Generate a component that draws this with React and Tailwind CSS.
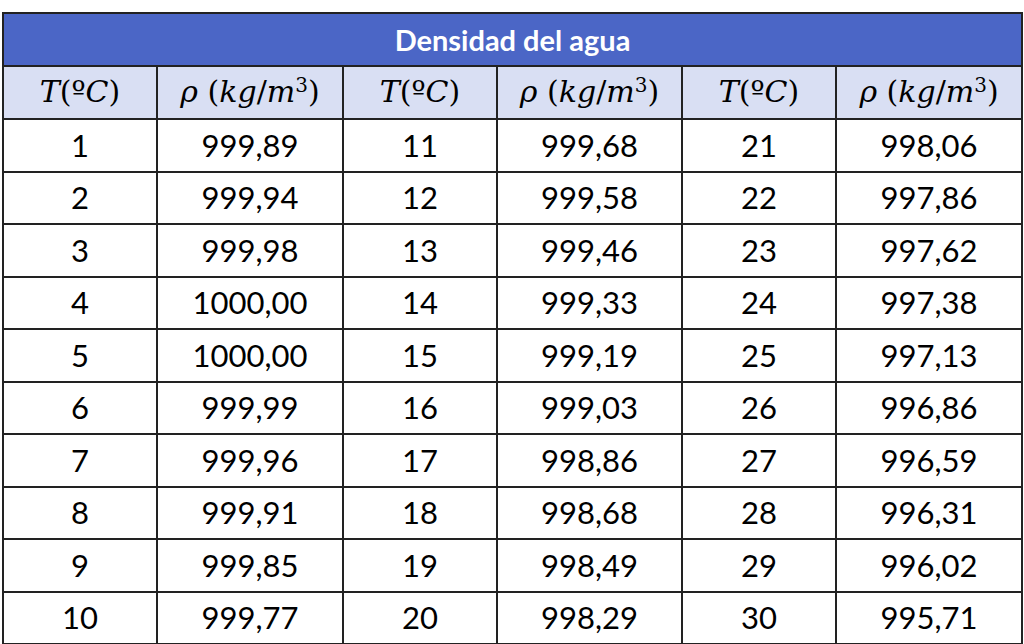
import React from "react";

const rows = [
  ["1", "999,89", "11", "999,68", "21", "998,06"],
  ["2", "999,94", "12", "999,58", "22", "997,86"],
  ["3", "999,98", "13", "999,46", "23", "997,62"],
  ["4", "1000,00", "14", "999,33", "24", "997,38"],
  ["5", "1000,00", "15", "999,19", "25", "997,13"],
  ["6", "999,99", "16", "999,03", "26", "996,86"],
  ["7", "999,96", "17", "998,86", "27", "996,59"],
  ["8", "999,91", "18", "998,68", "28", "996,31"],
  ["9", "999,85", "19", "998,49", "29", "996,02"],
  ["10", "999,77", "20", "998,29", "30", "995,71"],
];

const widths = ["w-[154px]", "w-[186px]", "w-[154px]", "w-[185px]", "w-[154px]", "w-[186px]"];

const TempHead = () => (
  <span className="font-['DejaVu_Serif',serif] text-[30px] leading-none">
    <i>T</i>(º<i>C</i>)
  </span>
);

const RhoHead = () => (
  <span className="font-['DejaVu_Serif',serif] text-[30px] leading-none whitespace-nowrap">
    <i>ρ</i> (<i>kg</i>/<i>m</i>
    <sup className="text-[20px] not-italic">3</sup>)
  </span>
);

const App = () => {
  return (
    <div className="w-[1024px] h-[644px] bg-white pt-[12px] pl-[2px]">
      <table className="table-fixed border-collapse w-[1019px] text-black font-['Lato',sans-serif]">
        <colgroup>
          {widths.map((w, i) => (
            <col key={i} className={w} />
          ))}
        </colgroup>
        <thead>
          <tr className="h-[53px]">
            <th
              colSpan={6}
              className="bg-[#4b66c6] border-2 border-[#222] text-white text-[29px] font-bold text-center"
            >
              Densidad del agua
            </th>
          </tr>
          <tr className="h-[53px] bg-[#d9dff3]">
            {[0, 1, 2, 3, 4, 5].map((i) => (
              <th key={i} className="border-2 border-[#222] font-normal text-center">
                {i % 2 === 0 ? <TempHead /> : <RhoHead />}
              </th>
            ))}
          </tr>
        </thead>
        <tbody>
          {rows.map((r, ri) => (
            <tr key={ri} className="h-[52.5px]">
              {r.map((c, ci) => (
                <td key={ci} className="border-2 border-[#222] text-center text-[31px] leading-none">
                  {c}
                </td>
              ))}
            </tr>
          ))}
        </tbody>
      </table>
    </div>
  );
};

export default App;
